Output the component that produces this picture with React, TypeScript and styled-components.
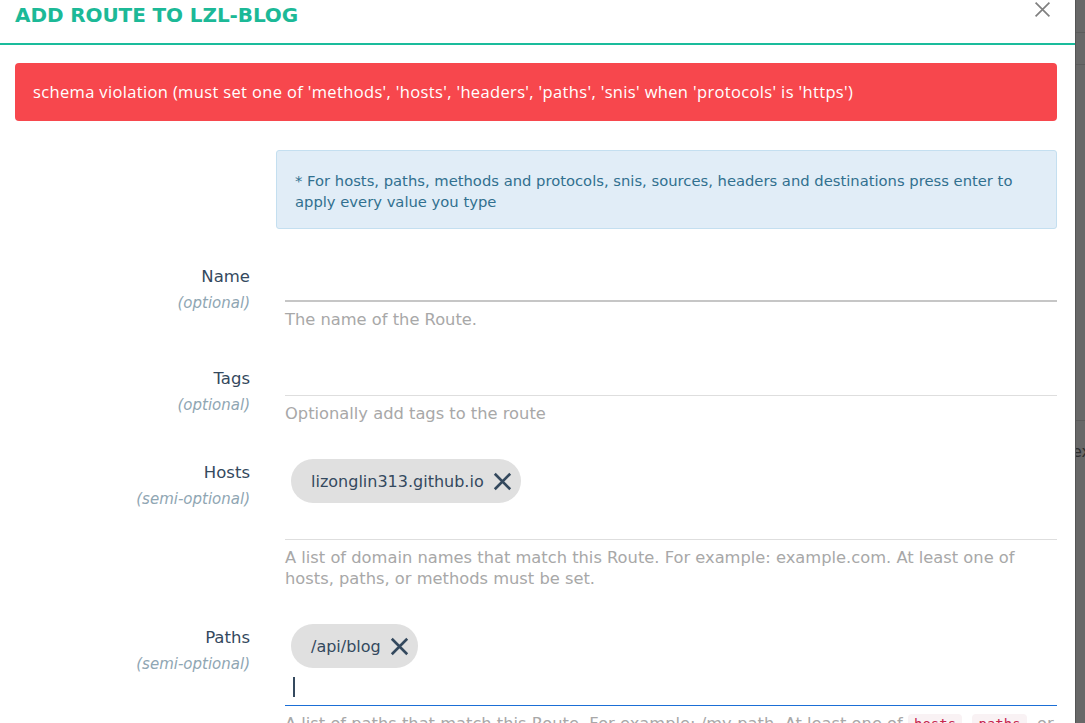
import React from "react";
import styled, { createGlobalStyle } from "styled-components";

const GlobalStyle = createGlobalStyle`
  html, body {
    margin: 0;
    padding: 0;
    background: #ffffff;
    overflow: hidden;
  }
  * { box-sizing: border-box; }
`;

const Page = styled.div`
  display: flex;
  width: 1085px;
  height: 723px;
  overflow: hidden;
`;

const Modal = styled.div`
  flex: 0 0 1075px;
  display: flex;
  flex-direction: column;
  background: #ffffff;
  font-family: "DejaVu Sans", "Noto Sans", sans-serif;
  overflow: hidden;
`;

const Header = styled.header`
  flex: none;
  height: 45px;
  display: flex;
  justify-content: space-between;
  align-items: flex-start;
  padding: 0 24px 0 15px;
  border-bottom: 2px solid #1abc9c;
`;

const Title = styled.h2`
  margin: 0;
  font-size: 20px;
  line-height: 31px;
  font-weight: 700;
  color: #1cb997;
  letter-spacing: -0.1px;
`;

const CloseButton = styled.button`
  border: 0;
  background: none;
  padding: 0;
  margin-top: 1px;
  width: 17px;
  height: 16px;
  display: flex;
  color: #808080;
  cursor: pointer;
`;

const Body = styled.div`
  display: flex;
  flex-direction: column;
  padding: 18px 18px 0 15px;
`;

const ErrorBox = styled.div`
  height: 58px;
  display: flex;
  align-items: center;
  padding: 0 18px 1px;
  background: #f7474d;
  color: #ffffff;
  border-radius: 4px;
  font-family: "Open Sans", "Noto Sans", sans-serif;
  font-size: 16.5px;
  letter-spacing: 0.35px;
`;

const InfoBox = styled.div`
  margin: 29px 0 0 261px;
  padding: 19px 18px 16px;
  border: 1px solid #c4dff0;
  background: #e1edf7;
  border-radius: 3px;
  color: #31708f;
  font-size: 14.75px;
  line-height: 21px;
`;

const Rows = styled.div`
  margin-top: 34px;
  display: flex;
  flex-direction: column;
  gap: 35px;
`;

const Row = styled.div`
  display: grid;
  grid-template-columns: 235px 1fr;
  column-gap: 35px;
`;

const LabelCell = styled.div`
  text-align: right;
  padding-top: 3px;
`;

const LabelText = styled.div`
  font-size: 16.5px;
  line-height: 22px;
  color: #34495e;
`;

const SubLabel = styled.div`
  margin-top: 5px;
  font-size: 15px;
  line-height: 20px;
  font-style: italic;
  color: #8fa6b3;
`;

const Field = styled.div`
  display: flex;
  flex-direction: column;
`;

const InputArea = styled.div<{ $height?: number; $line: "strong" | "soft" | "focus" }>`
  ${(p) => (p.$height ? `height: ${p.$height}px;` : "")}
  display: flex;
  flex-direction: column;
  border-bottom: ${(p) =>
    p.$line === "strong"
      ? "2px solid #c6c6c6"
      : p.$line === "focus"
      ? "1px solid #1b6fd6"
      : "1px solid #dedede"};
`;

const ChipList = styled.div`
  display: flex;
  flex-wrap: wrap;
  gap: 6px;
  padding-left: 6px;
`;

const Chip = styled.span`
  height: 44px;
  display: inline-flex;
  align-items: center;
  gap: 9px;
  padding: 0 9px 0 20px;
  border-radius: 22px;
  background: #e0e0e0;
  color: #34495e;
  font-size: 16px;
`;

const ChipRemove = styled.span`
  display: inline-flex;
  width: 19px;
  height: 19px;
  color: #34495e;
`;

const InputLine = styled.div<{ $height: number }>`
  height: ${(p) => p.$height}px;
  display: flex;
  align-items: center;
  padding-left: 8px;
`;

const Caret = styled.span`
  width: 2px;
  height: 20px;
  background: #34495e;
`;

const Help = styled.div`
  margin-top: 7px;
  font-size: 16.3px;
  line-height: 21px;
  color: #a8a8a8;
`;

const Code = styled.code`
  font-family: "DejaVu Sans Mono", "Liberation Mono", monospace;
  font-size: 14px;
  padding: 2px 6px;
  border-radius: 4px;
  background: #f9f2f4;
  color: #c7254e;
`;

const Backdrop = styled.div`
  flex: 1;
  display: flex;
  flex-direction: column;
  background: #686868;
  border-left: 1px solid #555555;
  overflow: hidden;
`;

const BackdropBand = styled.div<{ $height: number }>`
  flex: none;
  height: ${(p) => p.$height}px;
  border-bottom: 1px solid #5c5c5c;
`;

const BackdropText = styled.div`
  margin: 21px 0 0 -4px;
  font-family: "DejaVu Sans", sans-serif;
  font-size: 16px;
  line-height: 20px;
  color: #2e2e2e;
  white-space: nowrap;
`;

const XIcon: React.FC<{ size: number; stroke: number }> = ({ size, stroke }) => (
  <svg width={size} height={size} viewBox="0 0 16 16" fill="none">
    <path
      d="M1.5 1.5 L14.5 14.5 M14.5 1.5 L1.5 14.5"
      stroke="currentColor"
      strokeWidth={stroke}
      strokeLinecap="butt"
    />
  </svg>
);

const TagChip: React.FC<{ label: string }> = ({ label }) => (
  <Chip>
    {label}
    <ChipRemove>
      <XIcon size={19} stroke={2.2} />
    </ChipRemove>
  </Chip>
);

export default function App() {
  return (
    <>
      <GlobalStyle />
      <Page>
        <Modal>
          <Header>
            <Title>ADD ROUTE TO LZL-BLOG</Title>
            <CloseButton aria-label="close">
              <XIcon size={17} stroke={1.6} />
            </CloseButton>
          </Header>
          <Body>
            <ErrorBox>
              schema violation (must set one of 'methods', 'hosts', 'headers', 'paths', 'snis' when 'protocols' is 'https')
            </ErrorBox>
            <InfoBox>
              * For hosts, paths, methods and protocols, snis, sources, headers and destinations press enter to apply every value you type
            </InfoBox>
            <Rows>
              <Row>
                <LabelCell>
                  <LabelText>Name</LabelText>
                  <SubLabel>(optional)</SubLabel>
                </LabelCell>
                <Field>
                  <InputArea $height={39} $line="strong" />
                  <Help>The name of the Route.</Help>
                </Field>
              </Row>
              <Row>
                <LabelCell>
                  <LabelText>Tags</LabelText>
                  <SubLabel>(optional)</SubLabel>
                </LabelCell>
                <Field>
                  <InputArea $height={31} $line="soft" />
                  <Help>Optionally add tags to the route</Help>
                </Field>
              </Row>
              <Row>
                <LabelCell>
                  <LabelText>Hosts</LabelText>
                  <SubLabel>(semi-optional)</SubLabel>
                </LabelCell>
                <Field>
                  <InputArea $line="soft">
                    <ChipList>
                      <TagChip label="lizonglin313.github.io" />
                    </ChipList>
                    <InputLine $height={36} />
                  </InputArea>
                  <Help>
                    A list of domain names that match this Route. For example: example.com. At least one of hosts, paths, or methods must be set.
                  </Help>
                </Field>
              </Row>
              <Row>
                <LabelCell>
                  <LabelText>Paths</LabelText>
                  <SubLabel>(semi-optional)</SubLabel>
                </LabelCell>
                <Field>
                  <InputArea $line="focus">
                    <ChipList>
                      <TagChip label="/api/blog" />
                    </ChipList>
                    <InputLine $height={37}>
                      <Caret />
                    </InputLine>
                  </InputArea>
                  <Help>
                    A list of paths that match this Route. For example: /my-path. At least one of <Code>hosts</Code>, <Code>paths</Code>, or <Code>methods</Code> must be set.
                  </Help>
                </Field>
              </Row>
            </Rows>
          </Body>
        </Modal>
        <Backdrop>
          <BackdropBand $height={33} />
          <BackdropBand $height={32} />
          <BackdropBand $height={356} />
          <BackdropText>ex</BackdropText>
        </Backdrop>
      </Page>
    </>
  );
}
